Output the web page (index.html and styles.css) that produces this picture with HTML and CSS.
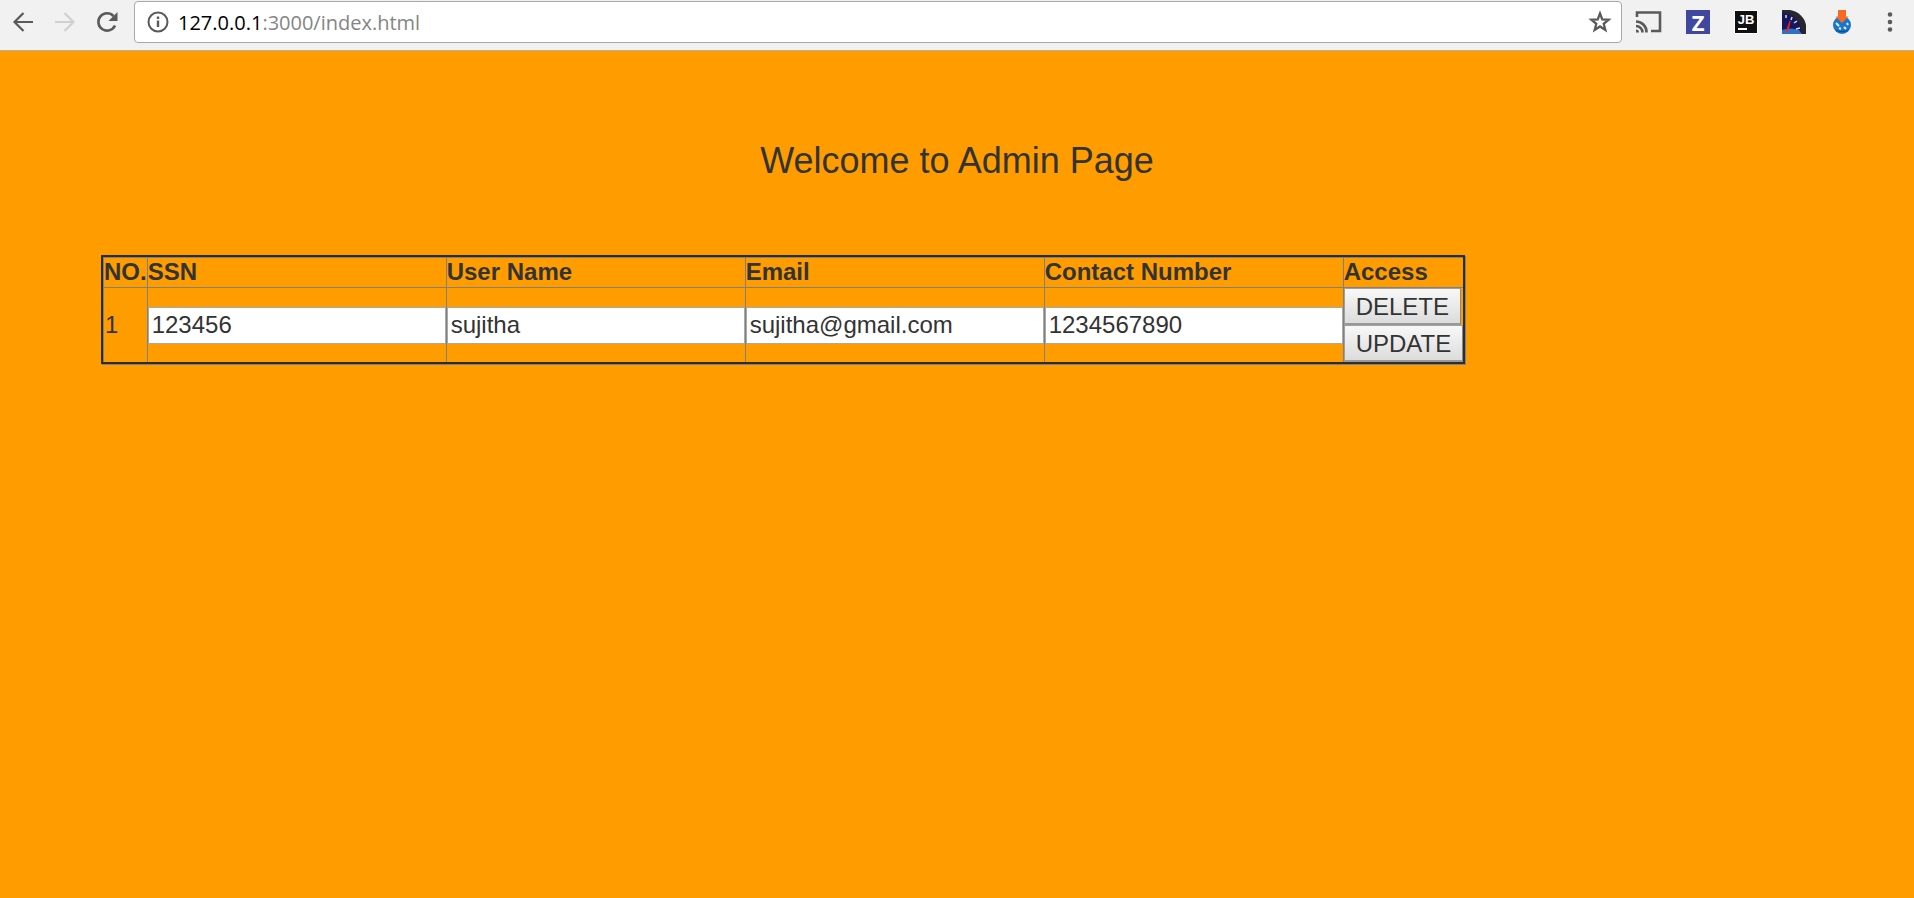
FILE: index.html
```
<!DOCTYPE html>
<html lang="en">
<head>
<meta charset="utf-8">
<title>Admin Page</title>
<link rel="stylesheet" href="styles.css">
</head>
<body>
<header class="toolbar">
  <nav class="nav" aria-label="Browser">
    <button class="icon-btn" type="button" aria-label="Back">
      <svg width="24" height="24" viewBox="0 0 24 24" fill="none" stroke="#5a5a5a" stroke-width="2.2"><path d="M22 12H4M12.500 3L3.500 12l9 9"/></svg>
    </button>
    <button class="icon-btn" type="button" aria-label="Forward" disabled>
      <svg width="24" height="24" viewBox="0 0 24 24" fill="none" stroke="#d0d0d0" stroke-width="2.2"><path d="M2 12h18M11.500 3l9 9-9 9"/></svg>
    </button>
    <button class="icon-btn" type="button" aria-label="Reload">
      <svg width="24" height="24" viewBox="0 0 24 24" fill="none"><path d="M20 15.500A8.700 8.700 0 1 1 18.500 6" stroke="#5a5a5a" stroke-width="2.600"/><path d="M22.500 2v9h-9z" fill="#5a5a5a"/></svg>
    </button>
  </nav>
  <div class="address">
    <svg width="22" height="22" viewBox="0 0 22 22" fill="none" stroke="#5a5a5a"><circle cx="11" cy="11" r="9.500" stroke-width="2"/><path d="M11 9.500V16M11 5.500V8" stroke-width="2.400"/></svg>
    <a class="url" href="#"><span class="host">127.0.0.1</span>:3000/index.html</a>
    <button class="icon-btn" type="button" aria-label="Bookmark">
      <svg width="24" height="24" viewBox="0 0 24 24" fill="none" stroke="#5a5a5a" stroke-width="2.300"><path d="M12 3.500l2.300 5.900 6.300.4-4.900 4 1.600 6.200-5.300-3.500L6.700 20l1.600-6.200-4.900-4 6.300-.4z"/></svg>
    </button>
  </div>
  <div class="extensions">
    <button class="icon-btn" type="button" aria-label="Cast">
      <svg width="27" height="24" viewBox="0 0 27 24" fill="none" stroke="#5a5a5a" stroke-width="2.600"><path d="M2 7V2.500h23v18.500h-9M1 11.500a10.500 10.500 0 0 1 10.500 11M1 16a6.500 6.500 0 0 1 6.500 6.500"/><path d="M1 19.500a3 3 0 0 1 3 3H1z" fill="#5a5a5a" stroke="none"/></svg>
    </button>
    <button class="icon-btn tile tile-z" type="button">Z</button>
    <button class="icon-btn tile tile-jb" type="button">JB</button>
    <button class="icon-btn" type="button" aria-label="Speed">
      <svg width="24" height="24" viewBox="0 0 24 24"><path d="M0 0h8c8 1 15 8 16 15v9H0z" fill="#28282c"/><path d="M0 3c11 0 19 7 20 21H0z" fill="#17175c"/><path d="M0 20q8-3 17 0l3 4H0z" fill="#2f72c4"/><path d="M4 5v3M10 7l-1 3M15 11l-3 2M18 18l-4 1" stroke="#d8d8ec" stroke-width="1.500"/><path d="M8 11L6.500 19.500 4 22z" fill="#f0202c" stroke="#f0202c"/></svg>
    </button>
    <button class="icon-btn" type="button" aria-label="Download">
      <svg width="24" height="24" viewBox="0 0 24 24"><circle cx="12" cy="15" r="9" fill="#1976c8"/><path d="M5 19a9 9 0 0 0 14 0q-7 4-14 0z" fill="#0a4f9e"/><path d="M6 13l3 3M9 18l2 1M14 17l2 2M17 13l1 2" stroke="#d9f0ff" stroke-width="2"/><path d="M8 0h8v6.500h2.500L12 13 5.500 6.500H8z" fill="#f96a20"/></svg>
    </button>
    <button class="icon-btn" type="button" aria-label="Menu">
      <svg width="24" height="24" viewBox="0 0 24 24" fill="#5a5a5a"><circle cx="12" cy="4.500" r="2.300"/><circle cx="12" cy="12" r="2.300"/><circle cx="12" cy="19.500" r="2.300"/></svg>
    </button>
  </div>
</header>
<main class="page">
  <h1 class="title">Welcome to Admin Page</h1>
  <table class="users">
    <thead>
      <tr>
        <th scope="col">NO.</th>
        <th scope="col" id="ssn">SSN</th>
        <th scope="col" id="name">User Name</th>
        <th scope="col" id="email">Email</th>
        <th scope="col" id="contact">Contact Number</th>
        <th scope="col">Access</th>
      </tr>
    </thead>
    <tbody>
      <tr>
        <td>1</td>
        <td><input class="field" type="text" value="123456" aria-labelledby="ssn"></td>
        <td><input class="field" type="text" value="sujitha" aria-labelledby="name"></td>
        <td><input class="field" type="text" value="sujitha@gmail.com" aria-labelledby="email"></td>
        <td><input class="field" type="text" value="1234567890" aria-labelledby="contact"></td>
        <td>
          <div class="actions">
            <button class="action" type="button">DELETE</button>
            <button class="action" type="button">UPDATE</button>
          </div>
        </td>
      </tr>
    </tbody>
  </table>
</main>
</body>
</html>
```
FILE: styles.css
```
* {
  box-sizing: border-box;
}

body {
  margin: 0;
  min-height: 100vh;
  background: #ff9d00;
  color: #333;
  font-family: "Liberation Sans", Arial, sans-serif;
  font-size: 24px;
}

.toolbar {
  display: flex;
  align-items: flex-start;
  padding: 1px 12px 7px 11px;
  background: #f1f1f1;
  border-bottom: 1px solid #b0b0b0;
}

.nav {
  display: flex;
  gap: 18px;
  margin-right: 15px;
  padding-top: 9px;
}

.icon-btn {
  display: flex;
  align-items: center;
  justify-content: center;
  padding: 0;
  border: 0;
  background: none;
}

.address {
  display: flex;
  flex: 1;
  align-items: center;
  height: 42px;
  padding: 0 9px 0 12px;
  background: #fff;
  border: 1px solid #a9a9a9;
  border-radius: 4px;
}

.url {
  flex: 1;
  margin-left: 9px;
  color: #858585;
  font-family: "Open Sans", "Noto Sans", sans-serif;
  font-size: 20px;
  text-decoration: none;
}

.host {
  color: #000;
}

.extensions {
  display: flex;
  align-items: center;
  gap: 24px;
  margin-left: 13px;
  padding-top: 9px;
}

.tile {
  width: 24px;
  height: 24px;
  color: #fff;
  font-family: "Open Sans", sans-serif;
  font-weight: 700;
}

.tile-z {
  background: #3f489e;
  font-size: 22px;
}

.tile-jb {
  background: linear-gradient(#fff, #fff) 3px 17px / 9px 2px no-repeat, #111;
  border: 1px solid #fff;
  padding-bottom: 6px;
  font-family: "Liberation Sans", Arial, sans-serif;
  font-size: 13px;
}

.page {
  padding: 89px 101px 0;
}

.title {
  margin: 0 0 73px;
  font-size: 36px;
  font-weight: 400;
  line-height: 42px;
  text-align: center;
}

.users {
  border: 2px solid #2d2d2d;
  border-spacing: 0;
  box-shadow: 1px 1px 0 #808080, inset 1px 1px 0 #808080;
  padding: 1px 0 0 1px;
}

.users th,
.users td {
  padding: 0;
  text-align: left;
}

.users th {
  padding-bottom: 1px;
  border-bottom: 1px solid #808080;
  line-height: 28px;
}

.users th + th,
.users td + td {
  border-left: 1px solid #808080;
}

.users td:first-child {
  padding-left: 1px;
}

.field {
  display: block;
  width: 298px;
  height: 37px;
  padding: 1px 3px;
  border: 1px solid #a9a9a9;
  background: #fff;
  color: #333;
  font: inherit;
}

.actions {
  display: flex;
  flex-direction: column;
  align-items: flex-start;
}

.action {
  height: 37px;
  padding: 2px 11px 0;
  border: 1px solid #a0a0a0;
  border-right-color: #888;
  border-bottom: 2px solid #999;
  background: linear-gradient(#f8f8f8, #dcdcdc);
  color: #333;
  font: inherit;
}
```
